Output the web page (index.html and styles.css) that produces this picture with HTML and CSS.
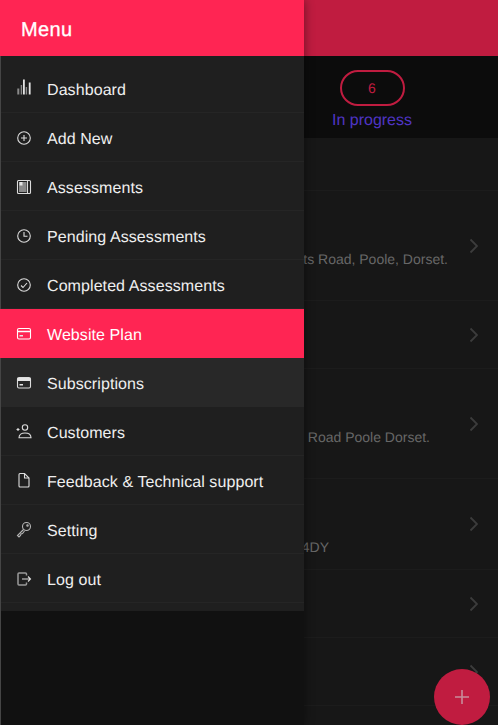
FILE: index.html
```html
<!DOCTYPE html>
<html>
<head>
  <meta charset="UTF-8">
  <title>Menu</title>
  <link rel="stylesheet" href="styles.css">
</head>
<body>
  <div class="app">
    <div class="topbar"></div>
    <div class="stats">
      <div class="stat">
        <div class="badge">6</div>
        <div class="stat-label">In progress</div>
      </div>
    </div>
    <div class="list">
      <div class="row row-head"></div>
      <div class="row row-a">
        <span class="addr addr-1">Roberts Road, Poole, Dorset.</span>
        <svg class="chev" viewBox="0 0 10 16"><path d="M2.500 1.500L9 8l-6.500 6.500"/></svg>
      </div>
      <div class="row row-b">
        <svg class="chev" viewBox="0 0 10 16"><path d="M2.500 1.500L9 8l-6.500 6.500"/></svg>
      </div>
      <div class="row row-a">
        <span class="addr addr-2">Road Poole Dorset.</span>
        <svg class="chev" viewBox="0 0 10 16"><path d="M2.500 1.500L9 8l-6.500 6.500"/></svg>
      </div>
      <div class="row row-c">
        <span class="addr addr-3">4DY</span>
        <svg class="chev" viewBox="0 0 10 16"><path d="M2.500 1.500L9 8l-6.500 6.500"/></svg>
      </div>
      <div class="row row-b">
        <svg class="chev" viewBox="0 0 10 16"><path d="M2.500 1.500L9 8l-6.500 6.500"/></svg>
      </div>
      <div class="row row-b">
        <svg class="chev" viewBox="0 0 10 16"><path d="M2.500 1.500L9 8l-6.500 6.500"/></svg>
      </div>
    </div>
    <div class="fab">
      <svg viewBox="0 0 16 16"><path d="M8 1v14M1 8h14"/></svg>
    </div>
  </div>

  <div class="drawer">
    <div class="drawer-head">Menu</div>
    <div class="menu">
      <div class="item">
        <svg viewBox="0 0 16 16"><path class="fill-dim" d="M1.300 7.500h2v6h-2zM9.700 6h1.400v7.500H9.700z"/><path class="fill" d="M7 -1.500h1.800v15H7zM12.800 1.500h1.800v12h-1.800z"/><path class="fill-dim" d="M4.700 4h1.400v9.500H4.700z"/></svg>
        Dashboard
      </div>
      <div class="item">
        <svg viewBox="0 0 16 16"><circle cx="8" cy="8" r="6.300"/><path d="M8 5v6M5 8h6"/></svg>
        Add New
      </div>
      <div class="item">
        <svg viewBox="0 0 16 16"><rect x="1.500" y="1.500" width="13" height="13" rx="1"/><path class="fill-dim" d="M3 3h7.500v10H3z"/><path class="fill" d="M3.500 3h3v3.500h-3z"/><path d="M11.500 2v12"/></svg>
        Assessments
      </div>
      <div class="item">
        <svg viewBox="0 0 16 16"><circle cx="8" cy="8" r="6.300"/><path d="M8 4v4.300h3.500"/></svg>
        Pending Assessments
      </div>
      <div class="item">
        <svg viewBox="0 0 16 16"><circle cx="8" cy="8" r="6.300"/><path d="M5 8.500l2 2 4-4.500"/></svg>
        Completed Assessments
      </div>
      <div class="item item-active">
        <svg viewBox="0 0 16 16"><rect x="1.500" y="2.500" width="13" height="10.500" rx="1.500"/><path d="M1.500 5.500h13" stroke-width="1.500"/><path class="fill" d="M3.500 9h3.500v1.500H3.500z"/></svg>
        Website Plan
      </div>
      <div class="item item-hover">
        <svg viewBox="0 0 16 16"><rect x="1.500" y="2.500" width="13" height="10.500" rx="1.500"/><path class="fill" d="M1.500 3h13v3h-13z"/><path class="fill" d="M3.500 9h3.500v1.500H3.500z"/></svg>
        Subscriptions
      </div>
      <div class="item">
        <svg viewBox="0 0 16 16"><circle cx="9" cy="3.500" r="2.700"/><path d="M3 13.800c0-3 2.500-4.800 6-4.800s6 1.800 6 4.800z"/><path d="M.5 5.500h3M2 4v3"/></svg>
        Customers
      </div>
      <div class="item">
        <svg viewBox="0 0 16 16"><path d="M3 1.500c0-.6.4-1 1-1h4.500l4.500 4.500v8c0 .6-.4 1-1 1H4c-.6 0-1-.4-1-1z"/><path d="M8.500 .5V5H13"/></svg>
        Feedback &amp; Technical support
      </div>
      <div class="item">
        <svg class="key" viewBox="0 0 16 16"><circle cx="10.500" cy="4.500" r="4"/><path d="M7.500 7.500L1.500 13.500l1.500 1.500 1.500-1.500 .5-1.500 1.500-.5 2-2.500"/><circle cx="11.500" cy="3.500" r=".7"/></svg>
        Setting
      </div>
      <div class="item">
        <svg viewBox="0 0 16 16"><path class="dim" d="M10.500 4.500V3c0-.6-.4-1-1-1H3c-.6 0-1 .4-1 1v10c0 .6.400 1 1 1h6.500c.6 0 1-.4 1-1v-1.500"/><path d="M6 8h8.500M12 5.500L14.500 8 12 10.500"/></svg>
        Log out
      </div>
    </div>
  </div>
</body>
</html>
```

FILE: styles.css
```css
* {
  box-sizing: border-box;
}
html, body {
  margin: 0;
  height: 100%;
}
body {
  position: relative;
  width: 498px;
  height: 725px;
  overflow: hidden;
  background: #171717;
  font-family: "Liberation Sans", Arial, sans-serif;
  text-rendering: geometricPrecision;
}

/* page behind the drawer */
.app {
  height: 725px;
  display: flex;
  flex-direction: column;
}
.topbar {
  height: 56px;
  background: #c01c40;
}
.stats {
  height: 82px;
  background: #0c0c0c;
  display: flex;
  justify-content: flex-end;
  padding-right: 76px;
}
.stat {
  width: 100px;
  padding-top: 14px;
  display: flex;
  flex-direction: column;
  align-items: center;
}
.badge {
  width: 65px;
  height: 36px;
  border: 2px solid #c01c40;
  border-radius: 18px;
  color: #c01c40;
  font-size: 14px;
  line-height: 32px;
  text-align: center;
}
.stat-label {
  margin-top: 6px;
  color: #4f35c4;
  font-size: 16px;
  line-height: 18px;
  white-space: nowrap;
}
.row {
  display: flex;
  align-items: center;
  border-bottom: 1px solid #1c1c1c;
  padding-right: 20px;
}
.row-head { height: 53px; }
.row-a { height: 110px; }
.row-b { height: 68px; }
.row-c { height: 91px; }
.addr {
  color: #676767;
  font-size: 14px;
  line-height: 16px;
  text-align: right;
  white-space: nowrap;
}
.addr-1 { width: 448px; margin-top: 27px; }
.addr-2 { width: 430px; margin-top: 27px; }
.addr-3 { width: 329px; margin-top: 45px; }
.chev {
  width: 10px;
  height: 16px;
  margin-left: auto;
  flex-shrink: 0;
}
.chev path {
  fill: none;
  stroke: #3c3c3c;
  stroke-width: 1.800;
}
.fab {
  position: absolute;
  left: 434px;
  top: 669px;
  width: 56px;
  height: 56px;
  border-radius: 50%;
  background: #c01c40;
  display: flex;
  align-items: center;
  justify-content: center;
}
.fab svg {
  width: 16px;
  height: 16px;
}
.fab path {
  fill: none;
  stroke: #c88c9a;
  stroke-width: 1.600;
}

/* drawer */
.drawer {
  position: absolute;
  left: 0;
  top: 0;
  width: 304px;
  height: 725px;
  background: #111;
  border-left: 1px solid #454545;
  box-shadow: 0 0 10px rgba(0, 0, 0, .45);
}
.drawer-head {
  height: 56px;
  margin-left: -1px;
  padding-left: 21px;
  background: #ff2553;
  color: #fff;
  font-size: 20px;
  line-height: 60px;
  letter-spacing: .4px;
  -webkit-text-stroke: .3px #fff;
}
.menu {
  padding: 8px 0;
  background: #1f1f1f;
}
.item {
  height: 49px;
  display: flex;
  align-items: center;
  gap: 15px;
  padding: 6px 0 0 15px;
  border-bottom: 1px solid #252525;
  color: #efefef;
  font-size: 16px;
  letter-spacing: .08px;
  white-space: nowrap;
}
.item svg {
  width: 16px;
  height: 16px;
  margin-top: -5px;
  flex-shrink: 0;
  overflow: visible;
  fill: none;
  stroke: #dcdcdc;
  stroke-width: 1.100;
}
.item svg .fill {
  fill: #e4e4e4;
  stroke: none;
}
.item svg .fill-dim {
  fill: #8a8a8a;
  stroke: none;
}
.item svg .dim {
  stroke: #9a9a9a;
  stroke-width: 1.500;
}
.item svg.key {
  stroke: #b5b5b5;
}
.item-active {
  margin-left: -1px;
  padding: 5px 0 0 16px;
  background: #ff2553;
  border-bottom: none;
  color: #fff;
}
.item-active svg {
  stroke: #fff;
}
.item-hover {
  padding-top: 5px;
  background: #282828;
  border-bottom: none;
}
```
